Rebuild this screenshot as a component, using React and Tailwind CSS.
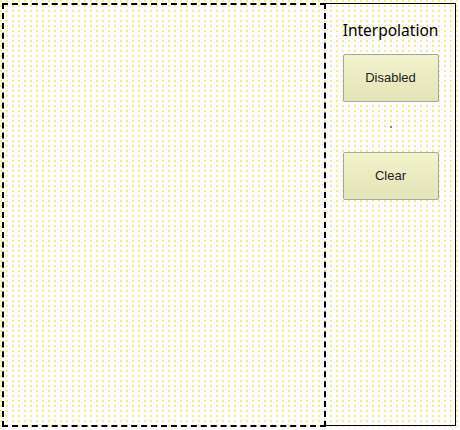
import React from 'react';

const dots =
  'bg-[radial-gradient(circle_at_1px_1px,#f3ec5a_0.6px,transparent_1px)] bg-[length:6px_5px]';

const Btn = ({ children }) => (
  <button
    className="w-[96px] h-[48px] rounded-[2px] border border-[#a8a8a0] bg-gradient-to-b from-[#f2f2cc] to-[#e4e4b8] text-[13px] text-[#222] font-['Liberation_Sans',Arial,sans-serif]"
  >
    {children}
  </button>
);

export default function App() {
  return (
    <div className={`w-[460px] h-[430px] bg-[#fdfdff] ${dots}`}>
      <div className="flex pt-[3px] pl-[2px]">
        {/* canvas */}
        <div className="w-[324px] h-[424px] border-2 border-dashed border-black" />
        {/* side panel */}
        <div className="w-[130px] h-[423px] border border-black border-l-0 flex flex-col items-center">
          <h2 className="mt-[16px] text-[15.5px] leading-[20px] text-black font-['Noto_Sans',sans-serif]">
            Interpolation
          </h2>
          <div className="mt-[14px]">
            <Btn>Disabled</Btn>
          </div>
          <div className="mt-[24px] w-[2px] h-[2px] bg-[#888]" />
          <div className="mt-[24px]">
            <Btn>Clear</Btn>
          </div>
        </div>
      </div>
    </div>
  );
}
